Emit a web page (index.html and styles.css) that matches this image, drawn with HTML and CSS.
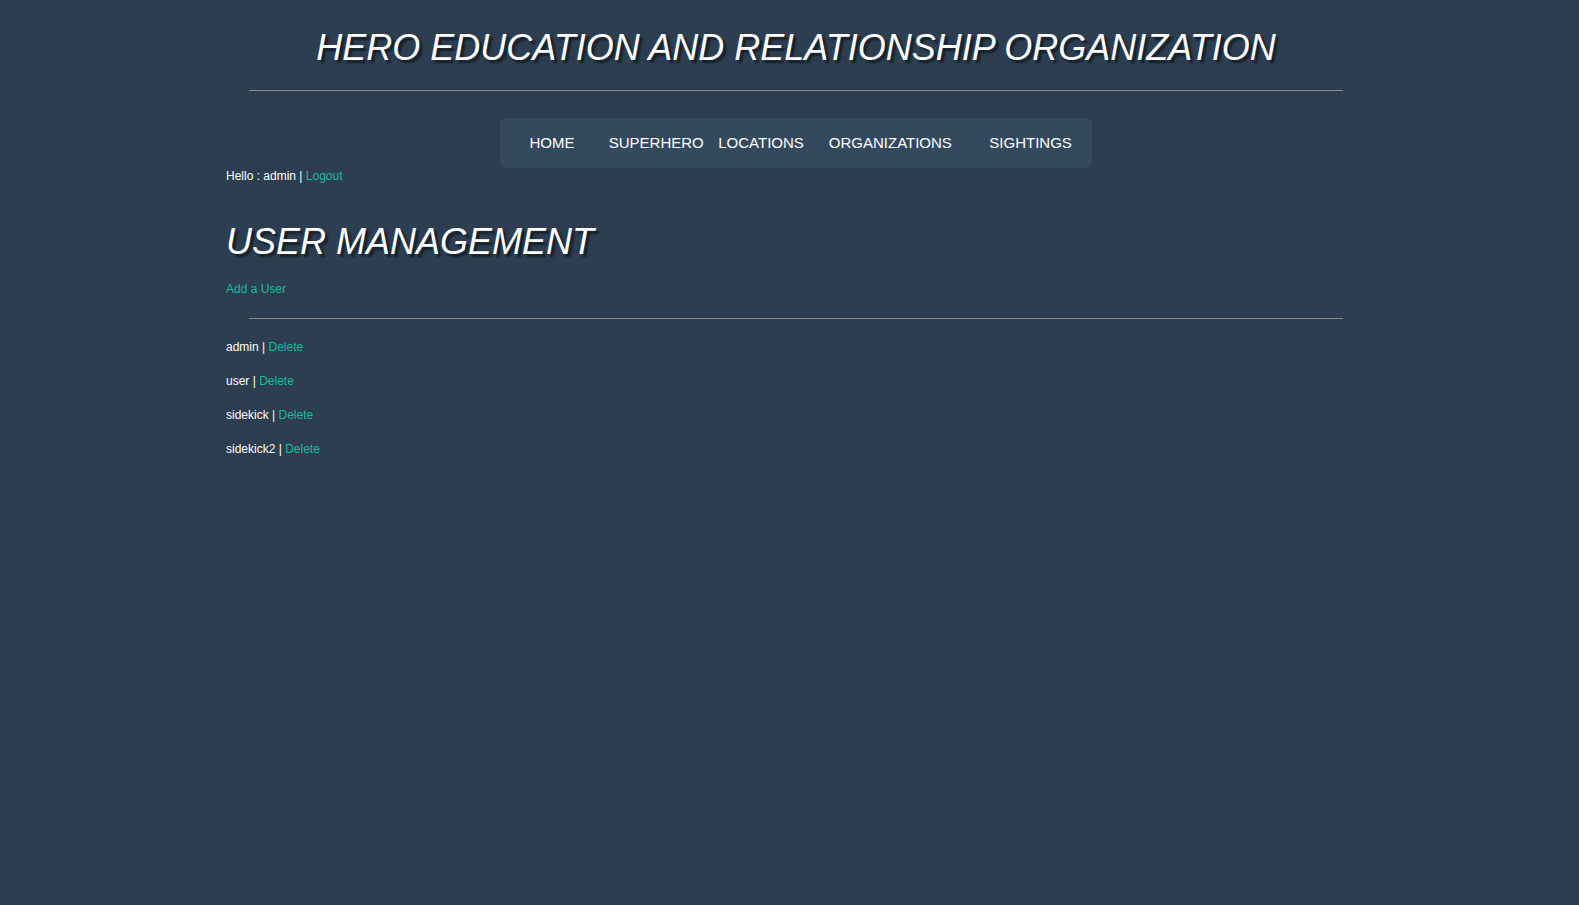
FILE: index.html
```html
<!DOCTYPE html>
<html lang="en">
<head>
<meta charset="utf-8">
<title>User Management</title>
<link rel="stylesheet" href="styles.css">
</head>
<body>
<div class="container">
  <h1 class="site-title">HERO EDUCATION AND RELATIONSHIP ORGANIZATION</h1>
  <hr class="rule">
  <nav class="nav">
    <a class="nav-item w-home" href="#">HOME</a>
    <a class="nav-item w-hero" href="#">SUPERHERO</a>
    <a class="nav-item w-loc" href="#">LOCATIONS</a>
    <a class="nav-item w-org" href="#">ORGANIZATIONS</a>
    <a class="nav-item w-sight" href="#">SIGHTINGS</a>
  </nav>
  <div class="hello">Hello : admin | <a class="link" href="#">Logout</a></div>
  <h2 class="page-title">USER MANAGEMENT</h2>
  <div class="add"><a class="link" href="#">Add a User</a></div>
  <hr class="rule rule-2">
  <div class="users">
    <p class="user-row">admin | <a class="link" href="#">Delete</a></p>
    <p class="user-row">user | <a class="link" href="#">Delete</a></p>
    <p class="user-row">sidekick | <a class="link" href="#">Delete</a></p>
    <p class="user-row">sidekick2 | <a class="link" href="#">Delete</a></p>
  </div>
</div>
</body>
</html>
```
FILE: styles.css
```css
html, body {
  background: #2c3e50;
}
body {
  margin: 0;
  padding: 0 0 0 13px;
  font-family: "Liberation Sans", Arial, Helvetica, sans-serif;
  color: #ffffff;
  font-size: 12px;
  line-height: 17px;
  min-height: 905px;
}
.container {
  width: 1140px;
  margin: 0 auto;
}
.site-title {
  margin: 28px 0 0;
  font-size: 36px;
  line-height: 40px;
  font-weight: normal;
  font-style: italic;
  text-align: center;
  color: #ffffff;
  text-shadow: 3px 3px 2px rgba(10, 18, 28, 0.7);
}
.rule {
  height: 0;
  border: 0;
  border-top: 1px solid #8a8a8a;
  margin: 22px 23px 0;
}
.nav {
  display: flex;
  width: 592px;
  height: 50px;
  margin: 27px auto 0;
  background: #34495e;
  border-radius: 6px;
}
.nav-item {
  display: block;
  text-align: center;
  color: #ffffff;
  text-decoration: none;
  font-size: 15px;
  line-height: 50px;
}
.w-home { width: 104px; }
.w-hero { width: 105px; }
.w-loc { width: 105px; }
.w-org { width: 154px; }
.w-sight { width: 123px; padding-left: 2px; }
.hello {
  margin: 0;
}
.link {
  color: #18bc9c;
  text-decoration: none;
}
.page-title {
  margin: 37px 0 0;
  font-size: 36px;
  line-height: 40px;
  font-weight: normal;
  font-style: italic;
  color: #ffffff;
  text-shadow: 3px 3px 2px rgba(10, 18, 28, 0.7);
}
.add {
  margin-top: 19px;
}
.rule-2 {
  margin-top: 20px;
}
.users {
  margin-top: 20px;
}
.user-row {
  margin: 0 0 17px;
}
```
